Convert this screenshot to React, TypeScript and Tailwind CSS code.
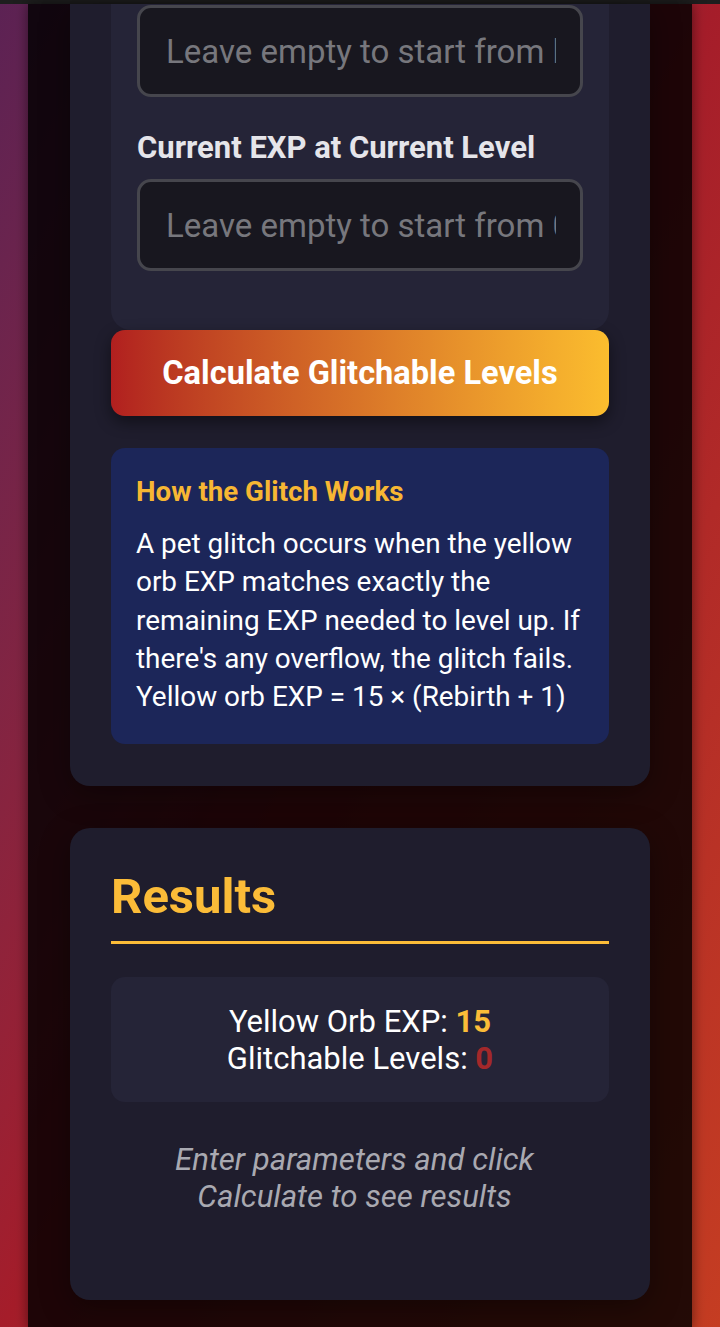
import { useState } from 'react';

export default function App() {
  const [rebirth] = useState(0);
  const orbExp = 15 * (rebirth + 1);

  const inputClass =
    'block w-full h-[92px] rounded-[14px] border-[3px] border-[#46464d] bg-[#18171f] pl-[26px] pr-[24px] text-[33px] text-white placeholder:text-[#77777d] outline-none';

  return (
    <div
      className="flex min-h-screen flex-col bg-gradient-to-br from-[#5c2254] via-[#a51d2a] to-[#c53d22]"
      style={{ fontFamily: 'Roboto, "Noto Sans", sans-serif' }}
    >
      <div className="h-[4px] bg-[#1e1e1e]" />
      <div className="mx-[28px] flex-1 bg-black/[0.82] px-[42px] pb-[29px] shadow-[0_0_12px_rgba(0,0,0,0.5)]">
        <div className="rounded-b-[20px] bg-[#1f1d2d] px-[41px] pb-[42px] shadow-[0_8px_30px_rgba(0,0,0,0.35)]">
          <div className="rounded-b-[20px] bg-[#252437] px-[26px] pt-[1px] pb-[59px]">
            <input className={inputClass} placeholder="Leave empty to start from level 1" />
            <label className="mt-[32px] mb-[12px] block text-[31px] font-bold leading-[38px] text-[#e5e5ea]">
              Current EXP at Current Level
            </label>
            <input className={inputClass} placeholder="Leave empty to start from 0" />
          </div>

          <button className="block h-[86px] w-full rounded-[14px] bg-gradient-to-r from-[#b11f1f] to-[#fbbd2e] text-[32.6px] font-bold text-white shadow-[0_6px_16px_rgba(0,0,0,0.45)]">
            Calculate Glitchable Levels
          </button>

          <div className="mt-[32px] rounded-[14px] bg-[#1c2659] px-[25px] pt-[24px] pb-[28px]">
            <h3 className="text-[27.7px] font-bold leading-[40px] text-[#f7b733]">How the Glitch Works</h3>
            <p className="mt-[13px] text-[27.9px] leading-[38.3px] text-white">
              A pet glitch occurs when the yellow orb EXP matches exactly the remaining EXP needed to level up. If
              there's any overflow, the glitch fails. Yellow orb EXP = 15 × (Rebirth + 1)
            </p>
          </div>
        </div>

        <div className="mt-[42px] rounded-[20px] bg-[#1f1d2d] px-[41px] pt-[41px] pb-[85px] shadow-[0_8px_30px_rgba(0,0,0,0.35)]">
          <h2 className="border-b-[3px] border-[#fbbc38] pb-[16px] text-[49px] font-bold leading-[56px] text-[#fbbc38]">
            Results
          </h2>
          <div className="mt-[33px] rounded-[14px] bg-[#252437] pt-[26px] pb-[25px] text-center text-[31px] leading-[37px] text-white">
            <div>
              Yellow Orb EXP: <span className="font-bold text-[#fbbc38]">{orbExp}</span>
            </div>
            <div>
              Glitchable Levels: <span className="font-bold text-[#a3282a]">0</span>
            </div>
          </div>
          <p className="mt-[39px] pr-[11px] text-center text-[31.2px] italic leading-[37px] text-[#a9a9b1]">
            Enter parameters and click
            <br />
            Calculate to see results
          </p>
        </div>
      </div>
    </div>
  );
}
